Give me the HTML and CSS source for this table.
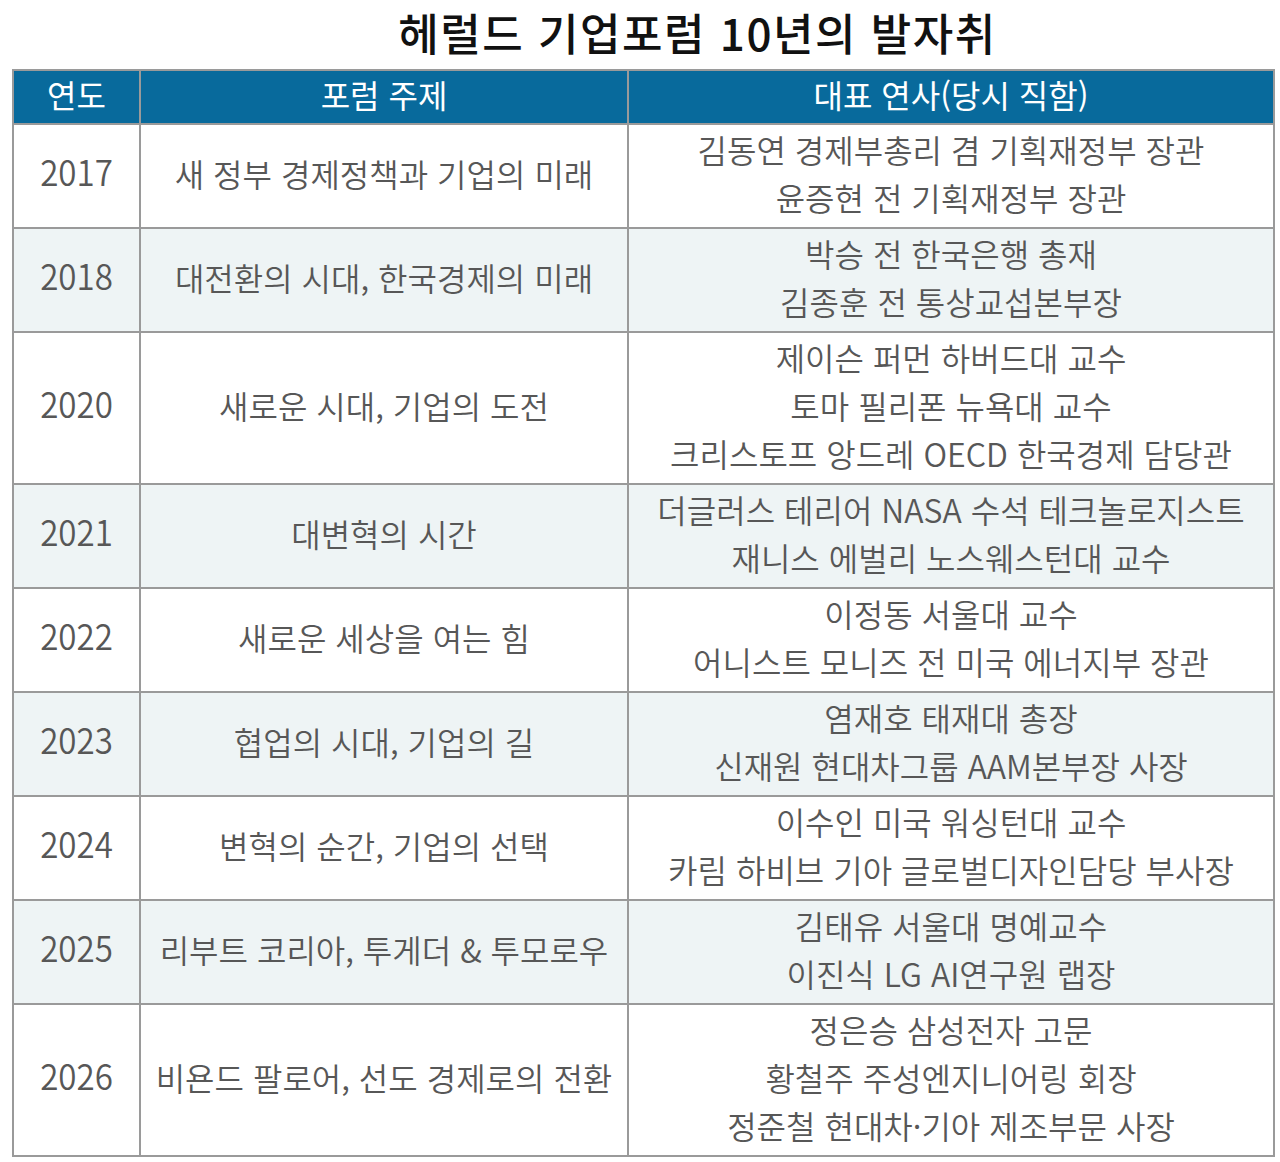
FILE: index.html
```html
<!DOCTYPE html>
<html lang="ko">
<head>
<meta charset="utf-8">
<title>헤럴드 기업포럼 10년의 발자취</title>
<link rel="stylesheet" href="styles.css">
</head>
<body>
<div class="page">
  <h1 class="title">헤럴드 기업포럼 10년의 발자취</h1>
  <table class="forum">
    <colgroup>
      <col class="c-year">
      <col class="c-theme">
      <col class="c-speaker">
    </colgroup>
    <thead>
      <tr><th>연도</th><th>포럼 주제</th><th>대표 연사(당시 직함)</th></tr>
    </thead>
    <tbody>
      <tr>
        <td><div class="lines year"><span>2017</span></div></td>
        <td><div class="lines"><span>새 정부 경제정책과 기업의 미래</span></div></td>
        <td><div class="lines"><span>김동연 경제부총리 겸 기획재정부 장관</span><span>윤증현 전 기획재정부 장관</span></div></td>
      </tr>
      <tr class="alt">
        <td><div class="lines year"><span>2018</span></div></td>
        <td><div class="lines"><span>대전환의 시대, 한국경제의 미래</span></div></td>
        <td><div class="lines"><span>박승 전 한국은행 총재</span><span>김종훈 전 통상교섭본부장</span></div></td>
      </tr>
      <tr>
        <td><div class="lines year"><span>2020</span></div></td>
        <td><div class="lines"><span>새로운 시대, 기업의 도전</span></div></td>
        <td><div class="lines"><span>제이슨 퍼먼 하버드대 교수</span><span>토마 필리폰 뉴욕대 교수</span><span>크리스토프 앙드레 OECD 한국경제 담당관</span></div></td>
      </tr>
      <tr class="alt">
        <td><div class="lines year"><span>2021</span></div></td>
        <td><div class="lines"><span>대변혁의 시간</span></div></td>
        <td><div class="lines"><span>더글러스 테리어 NASA 수석 테크놀로지스트</span><span>재니스 에벌리 노스웨스턴대 교수</span></div></td>
      </tr>
      <tr>
        <td><div class="lines year"><span>2022</span></div></td>
        <td><div class="lines"><span>새로운 세상을 여는 힘</span></div></td>
        <td><div class="lines"><span>이정동 서울대 교수</span><span>어니스트 모니즈 전 미국 에너지부 장관</span></div></td>
      </tr>
      <tr class="alt">
        <td><div class="lines year"><span>2023</span></div></td>
        <td><div class="lines"><span>협업의 시대, 기업의 길</span></div></td>
        <td><div class="lines"><span>염재호 태재대 총장</span><span>신재원 현대차그룹 AAM본부장 사장</span></div></td>
      </tr>
      <tr>
        <td><div class="lines year"><span>2024</span></div></td>
        <td><div class="lines"><span>변혁의 순간, 기업의 선택</span></div></td>
        <td><div class="lines"><span>이수인 미국 워싱턴대 교수</span><span>카림 하비브 기아 글로벌디자인담당 부사장</span></div></td>
      </tr>
      <tr class="alt">
        <td><div class="lines year"><span>2025</span></div></td>
        <td><div class="lines"><span>리부트 코리아, 투게더 &amp; 투모로우</span></div></td>
        <td><div class="lines"><span>김태유 서울대 명예교수</span><span>이진식 LG AI연구원 랩장</span></div></td>
      </tr>
      <tr>
        <td><div class="lines year"><span>2026</span></div></td>
        <td><div class="lines"><span>비욘드 팔로어, 선도 경제로의 전환</span></div></td>
        <td><div class="lines"><span>정은승 삼성전자 고문</span><span>황철주 주성엔지니어링 회장</span><span>정준철 현대차·기아 제조부문 사장</span></div></td>
      </tr>
    </tbody>
  </table>
</div>
</body>
</html>
```

FILE: styles.css
```css
* { box-sizing: border-box; }

body {
  margin: 0;
  background: #ffffff;
  font-family: "Noto Sans CJK KR", "Noto Sans", sans-serif;
}

.page {
  width: 1273px;
  padding-left: 12px;
}

.title {
  margin: 0;
  height: 69px;
  line-height: 64px;
  padding-left: 110px;
  text-align: center;
  font-size: 44px;
  font-weight: 500;
  letter-spacing: 1.5px;
  color: #111111;
  white-space: nowrap;
}

.forum {
  width: 1261px;
  table-layout: fixed;
  border-collapse: collapse;
  border: 2px solid #9a9a9a;
}

.c-year { width: 127px; }
.c-theme { width: 488px; }
.c-speaker { width: 646px; }

.forum th {
  background: #086a9c;
  color: #ffffff;
  font-size: 32px;
  font-weight: 400;
  line-height: 46px;
  padding: 0 0 6px;
  border: 2px solid #9a9a9a;
  text-align: center;
  white-space: nowrap;
}

.forum td {
  padding: 0;
  border: 2px solid #9a9a9a;
  vertical-align: middle;
  background: #ffffff;
}

.forum tr.alt td {
  background: #eef4f5;
}

.lines {
  display: flex;
  flex-direction: column;
  align-items: center;
  padding-bottom: 6px;
  font-size: 32px;
  font-weight: 350;
  line-height: 48px;
  color: #575757;
  white-space: nowrap;
}

.lines span {
  display: block;
}

.lines.year {
  padding-bottom: 12px;
}

.lines.year span {
  font-size: 36px;
  transform: scaleX(0.92);
}
```
